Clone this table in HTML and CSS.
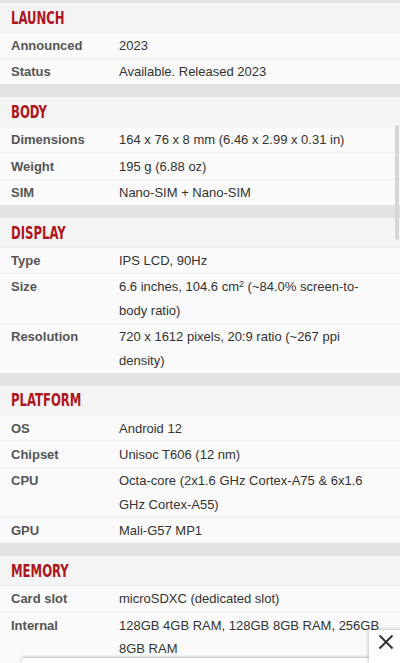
FILE: index.html
```html
<!DOCTYPE html>
<html>
<head>
<meta charset="utf-8">
<link rel="stylesheet" href="styles.css">
</head>
<body>
<div class="specs">
  <div class="band band-top"></div>
  <section class="sect">
    <h2 class="head"><span>LAUNCH</span></h2>
    <div class="row"><div class="lbl">Announced</div><div class="val">2023</div></div>
    <div class="row"><div class="lbl">Status</div><div class="val">Available. Released 2023</div></div>
  </section>
  <div class="band"></div>
  <section class="sect">
    <h2 class="head"><span>BODY</span></h2>
    <div class="row"><div class="lbl">Dimensions</div><div class="val">164 x 76 x 8 mm (6.46 x 2.99 x 0.31 in)</div></div>
    <div class="row"><div class="lbl">Weight</div><div class="val">195 g (6.88 oz)</div></div>
    <div class="row"><div class="lbl">SIM</div><div class="val">Nano-SIM + Nano-SIM</div></div>
  </section>
  <div class="band"></div>
  <section class="sect">
    <h2 class="head"><span>DISPLAY</span></h2>
    <div class="row"><div class="lbl">Type</div><div class="val">IPS LCD, 90Hz</div></div>
    <div class="row"><div class="lbl">Size</div><div class="val">6.6 inches, 104.6 cm<sup>2</sup> (~84.0% screen-to-body ratio)</div></div>
    <div class="row"><div class="lbl">Resolution</div><div class="val">720 x 1612 pixels, 20:9 ratio (~267 ppi density)</div></div>
  </section>
  <div class="band"></div>
  <section class="sect">
    <h2 class="head"><span>PLATFORM</span></h2>
    <div class="row"><div class="lbl">OS</div><div class="val">Android 12</div></div>
    <div class="row"><div class="lbl">Chipset</div><div class="val">Unisoc T606 (12 nm)</div></div>
    <div class="row"><div class="lbl">CPU</div><div class="val">Octa-core (2x1.6 GHz Cortex-A75 &amp; 6x1.6 GHz Cortex-A55)</div></div>
    <div class="row"><div class="lbl">GPU</div><div class="val">Mali-G57 MP1</div></div>
  </section>
  <div class="band"></div>
  <section class="sect">
    <h2 class="head"><span>MEMORY</span></h2>
    <div class="row"><div class="lbl">Card slot</div><div class="val">microSDXC (dedicated slot)</div></div>
    <div class="row"><div class="lbl">Internal</div><div class="val">128GB 4GB RAM, 128GB 8GB RAM, 256GB 8GB RAM</div></div>
  </section>
</div>
<div class="scrollbar"></div>
<div class="ad-bar"></div>
<button class="close" aria-label="Close">
  <svg width="16" height="16" viewBox="0 0 16 16"><path d="M1.5 1.5 L14.5 14.5 M14.5 1.5 L1.5 14.5" stroke="#333" stroke-width="2" fill="none"/></svg>
</button>
</body>
</html>
```
FILE: styles.css
```css
html, body {
  margin: 0;
  padding: 0;
  background: #fafafa;
  overflow: hidden;
}
body {
  width: 400px;
  height: 663px;
  position: relative;
  font-family: "Liberation Sans", Arial, sans-serif;
}
.specs {
  display: flex;
  flex-direction: column;
}
.band {
  height: 13px;
  background: #e3e3e3;
}
.band-top {
  height: 3px;
}
.sect {
  display: flex;
  flex-direction: column;
}
.head {
  margin: 0;
  height: 28.5px;
  display: flex;
  align-items: center;
  padding-left: 11px;
  background: #f4f4f4;
  box-sizing: border-box;
}
.head span {
  font-family: "DejaVu Sans Condensed", "DejaVu Sans", sans-serif;
  font-weight: bold;
  font-size: 18px;
  color: #b0141c;
  display: inline-block;
  transform: scaleX(0.72);
  transform-origin: left center;
  line-height: 1;
  padding-top: 1px;
}
.row {
  display: flex;
  background: #fafafa;
  border-top: 1px solid #ececec;
  padding: 1.5px 0 0.5px;
  line-height: 23.4px;
  font-size: 13px;
}
.lbl {
  width: 108px;
  flex: none;
  padding-left: 11px;
  font-weight: bold;
  color: #555;
}
.val {
  flex: 1;
  color: #333;
  padding-right: 20px;
}
.val sup {
  font-size: 9px;
  line-height: 0;
  vertical-align: 4px;
}
.scrollbar {
  position: absolute;
  left: 395px;
  top: 125px;
  width: 4px;
  height: 115px;
  border-radius: 2px;
  background: #d6d6d6;
}
.ad-bar {
  position: absolute;
  left: 22px;
  right: 22px;
  top: 658px;
  height: 10px;
  background: #fff;
  box-shadow: 0 -1px 3px rgba(0,0,0,0.25);
}
.close {
  position: absolute;
  left: 369px;
  top: 630px;
  width: 34px;
  height: 40px;
  border: none;
  padding: 0 0 0 9px;
  background: #fff;
  box-shadow: -1px -1px 3px rgba(0,0,0,0.2);
  display: flex;
  align-items: flex-start;
  padding-top: 4px;
}
```
